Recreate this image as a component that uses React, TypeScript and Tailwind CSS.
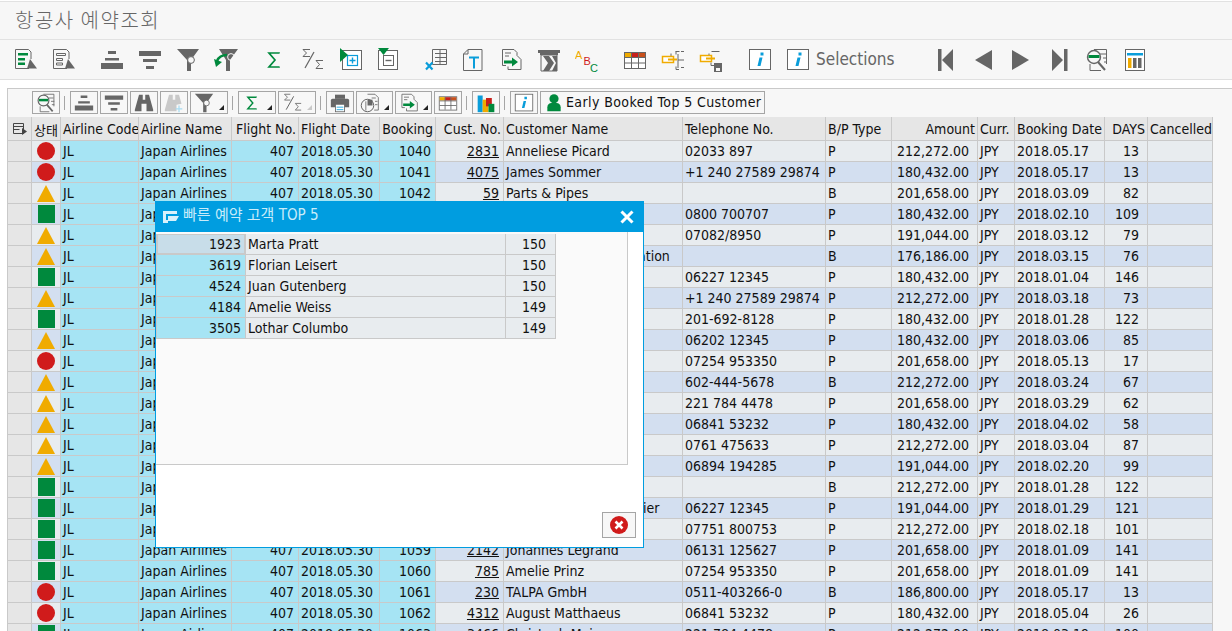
import type { FC, ReactNode } from 'react';

const GRAY = '#666666';
const GREEN = '#00893d';
const BLUE = '#0a9dda';

type Kind = 'red' | 'tri' | 'sq';
type Row = [Kind, string, string, string, string, string, string, string, string];

// rows 3-18 sit behind the dialog, so their customer columns can't be read
const rows: Row[] = [
  ['red', '1040', '2831', 'Anneliese Picard', '02033 897', 'P', '212,272.00', '2018.05.17', '13'],
  ['red', '1041', '4075', 'James Sommer', '+1 240 27589 29874', 'P', '180,432.00', '2018.05.17', '13'],
  ['tri', '1042', '59', 'Parts & Pipes', '', 'B', '201,658.00', '2018.03.09', '82'],
  ['sq', '1043', '', '', '0800 700707', 'P', '180,432.00', '2018.02.10', '109'],
  ['tri', '1044', '', '', '07082/8950', 'P', '191,044.00', '2018.03.12', '79'],
  ['tri', '1045', '', 'ation', '', 'B', '176,186.00', '2018.03.15', '76'],
  ['sq', '1046', '', '', '06227 12345', 'P', '180,432.00', '2018.01.04', '146'],
  ['tri', '1047', '', '', '+1 240 27589 29874', 'P', '212,272.00', '2018.03.18', '73'],
  ['sq', '1048', '', '', '201-692-8128', 'P', '180,432.00', '2018.01.28', '122'],
  ['tri', '1049', '', '', '06202 12345', 'P', '180,432.00', '2018.03.06', '85'],
  ['red', '1050', '', '', '07254 953350', 'P', '201,658.00', '2018.05.13', '17'],
  ['tri', '1051', '', '', '602-444-5678', 'B', '212,272.00', '2018.03.24', '67'],
  ['tri', '1052', '', '', '221 784 4478', 'P', '201,658.00', '2018.03.29', '62'],
  ['tri', '1053', '', '', '06841 53232', 'P', '180,432.00', '2018.04.02', '58'],
  ['tri', '1054', '', '', '0761 475633', 'P', '212,272.00', '2018.03.04', '87'],
  ['tri', '1055', '', '', '06894 194285', 'P', '191,044.00', '2018.02.20', '99'],
  ['sq', '1056', '', '', '', 'B', '212,272.00', '2018.01.28', '122'],
  ['sq', '1057', '', 'ier', '06227 12345', 'P', '191,044.00', '2018.01.29', '121'],
  ['sq', '1058', '', '', '07751 800753', 'P', '212,272.00', '2018.02.18', '101'],
  ['sq', '1059', '2142', 'Johannes Legrand', '06131 125627', 'P', '201,658.00', '2018.01.09', '141'],
  ['sq', '1060', '785', 'Amelie Prinz', '07254 953350', 'P', '201,658.00', '2018.01.09', '141'],
  ['red', '1061', '230', 'TALPA GmbH', '0511-403266-0', 'B', '186,800.00', '2018.05.17', '13'],
  ['red', '1062', '4312', 'August Matthaeus', '06841 53232', 'P', '180,432.00', '2018.05.04', '26'],
  ['sq', '1063', '3466', 'Christoph Mair', '221 784 4478', 'P', '212,272.00', '2018.03.19', '100'],
];

const top5 = [
  ['1923', 'Marta Pratt', '150'],
  ['3619', 'Florian Leisert', '150'],
  ['4524', 'Juan Gutenberg', '150'],
  ['4184', 'Amelie Weiss', '149'],
  ['3505', 'Lothar Columbo', '149'],
];

const headers: [string, boolean?][] = [
  ['상태'],
  ['Airline Code'],
  ['Airline Name'],
  ['Flight No.', true],
  ['Flight Date'],
  ['Booking', true],
  ['Cust. No.', true],
  ['Customer Name'],
  ['Telephone No.'],
  ['B/P Type'],
  ['Amount', true],
  ['Curr.'],
  ['Booking Date'],
  ['DAYS', true],
  ['Cancelled'],
];

const gridCols =
  'grid grid-cols-[24px_29px_78px_93px_67px_81px_56px_68px_179px_143px_66px_86px_37px_90px_43px_65px]';

const Ico: FC<{ size?: number; children: ReactNode }> = ({ size = 24, children }) => (
  <svg width={size} height={size} viewBox="0 0 24 24" className="shrink-0">
    {children}
  </svg>
);

const icons: Record<string, ReactNode> = {
  selectAll: (
    <>
      <path d="M2.5 1.5H15.5L18 4V11M16 20.5H2.5V1.5" fill="none" stroke={GRAY} />
      <path d="M5 5h10v2.5H5zM5 10h7v2.5H5zM5 14.5h7V17H5z" fill={GREEN} />
      <path d="M17 11L24 20.5H14z" fill={GRAY} />
    </>
  ),
  deselect: (
    <>
      <path d="M2.5 1.5H15.5L18 4V11M16 20.5H2.5V1.5" fill="none" stroke={GRAY} />
      <path d="M5.5 5.5h9v2h-9zM5.5 10.5h6v2h-6zM5.5 15h6v2h-6z" fill="none" stroke={GRAY} />
      <path d="M17 11L24 20.5H14z" fill={GRAY} />
    </>
  ),
  sortAsc: <path d="M8 3h8v3H8zM5 10h14v2.5H5zM1 15h22v6H1z" fill={GRAY} />,
  sortDesc: <path d="M1 3h22v5H1zM5 11h14v3H5zM8 18h8v3H8z" fill={GRAY} />,
  filter: (
    <>
      <path d="M1 1h22L15 12v11h-4V12z" fill={GRAY} />
      <circle cx="15" cy="12" r="3.4" fill="#f7f7f7" stroke={GRAY} />
    </>
  ),
  filterDel: (
    <>
      <path d="M5 1h19L16 12v11h-4V12z" fill={GRAY} />
      <circle cx="17" cy="9" r="3.4" fill="none" stroke="#f7f7f7" />
      <path d="M3 13c2-5 6-6 10-6" fill="none" stroke={GREEN} strokeWidth="2.4" />
      <path d="M0 11l8 3-6 5z" fill={GREEN} />
    </>
  ),
  sum: <path d="M17 5.5V5H7l6 7-6 7h10v-.5" fill="none" stroke={GREEN} strokeWidth="1.7" />,
  subtotal: (
    <>
      <path d="M10 1.500H3l3.500 3.500L3 8.500h7M23 12.500h-7l3.500 4-3.500 4h7" fill="none" stroke={GRAY} />
      <path d="M14 4L5 20" stroke={GRAY} strokeWidth="1.200" />
    </>
  ),
  expand: (
    <>
      <rect x="4.500" y="2.500" width="19" height="19" fill="#fff" stroke={GRAY} />
      <rect x="9.500" y="7.500" width="10" height="10" fill="none" stroke={BLUE} strokeWidth="1.200" />
      <path d="M14.500 9.500v6M11.500 12.500h6" stroke={BLUE} strokeWidth="1.400" />
      <path d="M2 0l8 7-8 7z" fill={GREEN} />
    </>
  ),
  collapse: (
    <>
      <rect x="2.500" y="2.500" width="19" height="19" fill="#fff" stroke={GRAY} />
      <rect x="7.500" y="7.500" width="10" height="10" fill="none" stroke={GRAY} />
      <path d="M9.500 12.500h6" stroke={GRAY} strokeWidth="1.400" />
      <path d="M2 0h11L7.500 7z" fill={GREEN} />
    </>
  ),
  excel: (
    <>
      <path d="M9.500 1.500h14v15h-14zM12 5.500h11M12 9.500h11M12 13.500h11M17 2v14" fill="none" stroke={GRAY} />
      <path d="M3 14.500l6.500 7M9.500 14.500L3 21.500" stroke={BLUE} strokeWidth="2.200" />
    </>
  ),
  word: (
    <>
      <path d="M7 1.500h14v21H2.500V6z M7 1.500V6H2.500" fill="none" stroke={GRAY} />
      <path d="M8 8.500h10v2H14v10h-2v-10H8z" fill={BLUE} />
    </>
  ),
  exportIco: (
    <>
      <path d="M3.500 1.500H15l3 3v3M3.500 1.500v16H7" fill="none" stroke={GRAY} />
      <path d="M18 7.500l4 4v10H9v-3" fill="none" stroke={GRAY} />
      <path d="M6 5h6M6 8h4" stroke={GRAY} />
      <path d="M5 12.500h8v-3l6 4.500-6 4.500v-3H5z" fill={GREEN} />
    </>
  ),
  pdfIco: (
    <>
      <path d="M1 2h22v3h-2v2H3V5H1z" fill={GRAY} />
      <path d="M4 7h16v16H4z" fill="none" stroke={GRAY} />
      <path d="M6 8h6l5 7-5 8H6l5-8z" fill={GRAY} />
      <path d="M15 8h5v15h-5l4-8z" fill={GRAY} />
    </>
  ),
  abc: (
    <>
      <text x="0" y="11" fontSize="11" fill="#f0ab00" fontFamily="'Liberation Sans',sans-serif">A</text>
      <text x="8.500" y="17" fontSize="11" fill="#d01b1b" fontFamily="'Liberation Sans',sans-serif">B</text>
      <text x="15" y="23.500" fontSize="11" fill={GREEN} fontFamily="'Liberation Sans',sans-serif">C</text>
    </>
  ),
  table: (
    <>
      <rect x="1.500" y="4.500" width="21" height="16" fill="#fff" stroke={GRAY} />
      <path d="M2 5h6.500v4H2z" fill="#f0ab00" />
      <path d="M8.500 5h7v4h-7z" fill="#c8201c" />
      <path d="M15.500 5H22v4h-6.500z" fill="#c8501c" />
      <path d="M2 9.500h20M2 15h20M8.500 5v15M15.500 5v15" stroke={GRAY} />
    </>
  ),
  tree: (
    <>
      <path d="M14.500 3.500h4M20 3.500h3M10 5.500v3M15 3.500v3M17 12h6M20 19.500h3M15 18.500v3h3M17 6v14" fill="none" stroke={GRAY} />
      <rect x="1.500" y="8.500" width="11" height="6" fill="#fff" stroke="#f0ab00" strokeWidth="1.500" />
      <path d="M7 10.500h9v2H7z" fill="#f0ab00" />
    </>
  ),
  treeSave: (
    <>
      <path d="M12.500 3.500h8M10 5.500v3M12 14.500v3h4" fill="none" stroke={GRAY} />
      <rect x="1.500" y="7.500" width="11" height="6" fill="#fff" stroke="#f0ab00" strokeWidth="1.500" />
      <path d="M7 9.500h9v2H7z" fill="#f0ab00" />
      <path d="M15 15h8v9h-8z" fill={GRAY} />
      <path d="M17 20h4v3h-4z" fill="#f7f7f7" />
    </>
  ),
  info: (
    <>
      <rect x="1.500" y="1.500" width="21" height="20" fill="#fff" stroke={GRAY} />
      <path d="M12.500 4.500h3v3h-3zM11.500 9.500h3l-2 8.500h-3z" fill={BLUE} />
    </>
  ),
  first: <path d="M5 1h3.500v22H5zM20 1v22L9 12z" fill={GRAY} />,
  prev: <path d="M21 2v20L4 12z" fill={GRAY} />,
  next: <path d="M3 2v20l17-10z" fill={GRAY} />,
  last: <path d="M5 1v22l11-11zM17 1h3.500v22H17z" fill={GRAY} />,
  find: (
    <>
      <path d="M9 1.500h12.500V16M5 16v6.500h11" fill="none" stroke={GRAY} />
      <path d="M15 6h6M18 10h4M19 14h3" stroke={GRAY} />
      <circle cx="9" cy="9" r="6.500" fill="#f7f7f7" stroke={GRAY} strokeWidth="1.400" />
      <path d="M3.500 7h11v3h-11z" fill={GREEN} />
      <path d="M13 14l7 8" stroke={GRAY} strokeWidth="2" />
    </>
  ),
  layout: (
    <>
      <rect x="2.500" y="1.500" width="19" height="21" fill="#fff" stroke={GRAY} />
      <path d="M4 5h16v2.500H4z" fill={BLUE} />
      <path d="M5 10h3.500v10H5z" fill="#f0ab00" />
      <path d="M10 10h3.500v10H10zM15 10h3.500v10H15z" fill={GRAY} />
    </>
  ),
  binoc: <path d="M6 2h4.500v6h3V2H18l5 18v2h-8v-9h-6v9H1v-2z" fill={GRAY} />,
  binocOff: (
    <>
      <path d="M6 2h4.500v6h3V2H18l3 11-6 1v8H9v-9H9v9H1v-2z" fill="#c9c9c9" />
      <path d="M18 15v8M14 19h8" stroke="#a8dcf2" strokeWidth="1.500" />
    </>
  ),
  print: (
    <>
      <path d="M6 2h12v5H6z" fill={GRAY} />
      <path d="M1 9c0-1 1-2 2-2h18c1 0 2 1 2 2v8H1z" fill={GRAY} />
      <rect x="6.500" y="13.500" width="11" height="9" fill="#fff" stroke={GRAY} />
      <path d="M8 17h8M8 20h8" stroke={BLUE} />
    </>
  ),
  views: (
    <>
      <path d="M9 1.500h9l4 4v15h-5" fill="none" stroke={GRAY} />
      <path d="M14 6h5M18 10h3M18 14h3" stroke={GRAY} />
      <circle cx="9" cy="15" r="7.500" fill="#f7f7f7" stroke={GRAY} strokeWidth="1.200" />
      <path d="M9 8h6v7H9z" fill={GRAY} />
      <path d="M7 10v11" stroke={GRAY} />
    </>
  ),
  graphic: (
    <>
      <path d="M2 3h6v20H2z" fill={BLUE} />
      <path d="M8 8h7v15H8z" fill="#f0ab00" />
      <path d="M12 6h7v10h-7z" fill="#c8201c" />
      <path d="M15 13h7v10h-7z" fill={GREEN} />
    </>
  ),
  person: (
    <>
      <circle cx="12" cy="7" r="5.500" fill={GREEN} />
      <path d="M4 22v-5c0-3 2-5 5-5h6c3 0 5 2 5 5v5z" fill={GREEN} />
    </>
  ),
};

const TopIcon: FC<{ name: string; className?: string }> = ({ name, className }) => (
  <span className={`flex w-[38px] shrink-0 justify-center ${className ?? ''}`}>
    <Ico>{icons[name]}</Ico>
  </span>
);

const ToolBtn: FC<{
  name: string;
  w?: string;
  menu?: boolean;
  off?: boolean;
  children?: ReactNode;
}> = ({ name, w = 'w-[28px]', menu, off, children }) => (
  <span className={`relative flex h-[23px] shrink-0 items-center border border-[#a5a5a5] pl-[3px] ${w}`}>
    <Ico size={20}>{icons[name]}</Ico>
    {children}
    {menu && (
      <span
        className={`absolute right-[3px] bottom-[3px] h-0 w-0 border-b-[5px] border-l-[5px] border-l-transparent ${
          off ? 'border-b-[#c9c9c9]' : 'border-b-[#222]'
        }`}
      />
    )}
  </span>
);

const Sep = () => <span className="mr-[5px] ml-[4px] h-[14px] w-[1px] shrink-0 bg-[#a5a5a5]" />;

const Status: FC<{ kind: Kind }> = ({ kind }) => {
  if (kind === 'red') return <span className="h-[18px] w-[18px] rounded-full bg-[#d01b1b]" />;
  if (kind === 'sq') return <span className="h-[18px] w-[17px] bg-[#00893d]" />;
  return (
    <span className="h-0 w-0 border-x-[9px] border-b-[17px] border-x-transparent border-b-[#f0ab00]" />
  );
};

const Cell: FC<{ className?: string; children?: ReactNode }> = ({ className = '', children }) => (
  <div className={`overflow-hidden whitespace-nowrap border-r border-b border-[#c9c9c9] px-[2px] leading-[20px] ${className}`}>
    {children}
  </div>
);

const CloseCircle = () => (
  <svg width="20" height="20" viewBox="0 0 20 20">
    <circle cx="10" cy="10" r="9" fill="#d01b1b" />
    <path d="M6.500 6.500l7 7M13.500 6.500l-7 7" stroke="#fff" strokeWidth="2.600" />
  </svg>
);

const Dialog = () => (
  <div className="absolute top-[201px] left-[155px] flex h-[347px] w-[489px] flex-col border border-[#009de0] bg-white">
    <div className="flex h-[30px] shrink-0 items-center bg-[#009de0] pr-[8px] pl-[6px] text-[#c8ecfa]">
      <svg width="18" height="14" viewBox="0 0 18 14" className="mr-[3px]">
        <path d="M1 1h14v3H4v6h2v3H1z" fill="#d8f1fb" />
        <path d="M6 6h11l-3 5H6z" fill="#d8f1fb" />
      </svg>
      <span className="pb-[3px] text-[15px]">빠른 예약 고객 TOP 5</span>
      <svg width="16" height="16" viewBox="0 0 16 16" className="mr-0 ml-auto">
        <path d="M2.500 2.500l11 11M13.500 2.500l-11 11" stroke="#fff" strokeWidth="3" />
      </svg>
    </div>
    <div className="mr-[15px] h-[233px] border-r border-b border-[#c9c9c9] bg-[#fafafa] pt-[2px]">
      <div className="w-[400px] border-l border-[#c9c9c9]">
        {top5.map(([id, name, n], i) => (
          <div key={id} className="grid grid-cols-[89px_260px_50px]">
            <Cell
              className={`pr-[4px] text-right ${
                i === 0 ? 'bg-[#c8dde9] shadow-[inset_0_0_0_1px_#c9c9c9]' : 'bg-[#a6e4f4]'
              }`}
            >
              {id}
            </Cell>
            <Cell className="bg-[#e8ecef]">{name}</Cell>
            <Cell className="bg-[#e8ecef] pr-[9px] text-right">{n}</Cell>
          </div>
        ))}
      </div>
    </div>
    <div className="flex justify-end pt-[47px] pr-[7px]">
      <span className="flex h-[26px] w-[34px] items-center justify-center border border-[#a5a5a5] bg-[#f7f7f7]">
        <CloseCircle />
      </span>
    </div>
  </div>
);

export default function App() {
  return (
    <div className="relative h-[631px] w-[1232px] overflow-hidden bg-white font-['DejaVu_Sans_Condensed','DejaVu_Sans','Noto_Sans_CJK_KR',sans-serif] text-[14px] text-[#111] [font-stretch:condensed]">
      <div className="mt-[1px] flex h-[39px] items-center border-y border-[#e2e2e2] bg-[#f7f7f7] pb-[1px] pl-[15px] font-['Noto_Sans_CJK_KR',sans-serif] text-[20px] font-light tracking-[1.500px] text-[#666]">
        항공사 예약조회
      </div>

      <div className="flex h-[40px] items-center border-b border-[#e0e0e0] bg-[#f7f7f7] pl-[6px]">
        <TopIcon name="selectAll" />
        <TopIcon name="deselect" />
        <TopIcon name="sortAsc" className="ml-[11px]" />
        <TopIcon name="sortDesc" />
        <TopIcon name="filter" />
        <TopIcon name="filterDel" />
        <TopIcon name="sum" className="ml-[10px]" />
        <TopIcon name="subtotal" />
        <TopIcon name="expand" />
        <TopIcon name="collapse" />
        <TopIcon name="excel" className="ml-[9px]" />
        <TopIcon name="word" />
        <TopIcon name="exportIco" />
        <TopIcon name="pdfIco" />
        <TopIcon name="abc" />
        <TopIcon name="table" className="ml-[10px]" />
        <TopIcon name="tree" />
        <TopIcon name="treeSave" />
        <TopIcon name="info" className="ml-[11px]" />
        <TopIcon name="info" />
        <span className="mr-[30px] ml-[-1px] w-[80px] pt-[1px] text-[17px] text-[#666]">Selections</span>
        <TopIcon name="first" />
        <TopIcon name="prev" />
        <TopIcon name="next" />
        <TopIcon name="last" />
        <TopIcon name="find" />
        <TopIcon name="layout" />
      </div>

      <div className="h-[8px] bg-white" />

      <div className="ml-[7px] flex flex-col border-t border-l border-[#c9c9c9] bg-[#f7f7f7]">
        <div className="flex h-[28px] items-center pb-[1px] pl-[24px]">
          <ToolBtn name="find" />
          <Sep />
          <ToolBtn name="sortAsc" />
          <span className="w-[2px]" />
          <ToolBtn name="sortDesc" />
          <span className="w-[2px]" />
          <ToolBtn name="binoc" />
          <span className="w-[2px]" />
          <ToolBtn name="binocOff" />
          <span className="w-[2px]" />
          <ToolBtn name="filter" w="w-[38px]" menu />
          <Sep />
          <ToolBtn name="sum" w="w-[38px]" menu />
          <span className="w-[2px]" />
          <ToolBtn name="subtotal" w="w-[38px]" menu off />
          <Sep />
          <ToolBtn name="print" />
          <span className="w-[2px]" />
          <ToolBtn name="views" w="w-[37px]" menu />
          <span className="w-[2px]" />
          <ToolBtn name="exportIco" w="w-[37px]" menu />
          <span className="w-[2px]" />
          <ToolBtn name="table" />
          <Sep />
          <ToolBtn name="graphic" />
          <Sep />
          <ToolBtn name="info" />
          <span className="w-[2px]" />
          <ToolBtn name="person" w="w-[225px]">
            <span className="ml-[2px] tracking-[0.4px] text-[#111]">Early Booked Top 5 Customer</span>
          </ToolBtn>
        </div>

        <div className={gridCols}>
          <div className="flex h-[24px] items-center justify-center border-r border-b border-[#c9c9c9] bg-[#e6e6e6]">
            <svg width="16" height="14" viewBox="0 0 16 14">
              <path d="M1.500 1.500h10v10h-10zM1.500 4.500h10M1.500 7.500h6" fill="none" stroke="#444" />
              <path d="M10 6l5 3.500-5 3.500z" fill="#444" />
            </svg>
          </div>
          {headers.map(([h, right], i) => (
            <Cell
              key={h}
              className={`h-[24px] bg-[#e6e6e6] leading-[25px] ${right ? 'text-right' : ''} ${
                i === 0 ? "font-['Noto_Sans_CJK_KR',sans-serif] text-[13px]" : ''
              }`}
            >
              {h}
            </Cell>
          ))}
        </div>

        {rows.map((r, i) => {
          const alt = i % 2 === 1 ? 'bg-[#d3dff0]' : 'bg-[#e8ecef]';
          // names of rows under the dialog only show their last letters
          const namePad = r[3] === 'ation' ? 'pl-[134px]' : r[3] === 'ier' ? 'pl-[139px]' : '';
          return (
            <div key={r[1]} className={`${gridCols} h-[21px]`}>
              <Cell className="bg-[#e6e6e6]" />
              <div className={`flex items-center justify-center border-r border-b border-[#c9c9c9] ${alt}`}>
                <Status kind={r[0]} />
              </div>
              <Cell className="bg-[#a6e4f4]">JL</Cell>
              <Cell className="bg-[#a6e4f4]">Japan Airlines</Cell>
              <Cell className="bg-[#a6e4f4] pr-[4px] text-right">407</Cell>
              <Cell className="bg-[#a6e4f4]">2018.05.30</Cell>
              <Cell className="bg-[#a6e4f4] pr-[4px] text-right">{r[1]}</Cell>
              <Cell className={`${alt} pr-[4px] text-right`}>
                <span className="underline">{r[2]}</span>
              </Cell>
              <Cell className={`${alt} ${namePad}`}>{r[3]}</Cell>
              <Cell className={alt}>{r[4]}</Cell>
              <Cell className={alt}>{r[5]}</Cell>
              <Cell className={`${alt} pr-[8px] text-right`}>{r[6]}</Cell>
              <Cell className={alt}>JPY</Cell>
              <Cell className={alt}>{r[7]}</Cell>
              <Cell className={`${alt} pr-[8px] text-right`}>{r[8]}</Cell>
              <Cell className={alt} />
            </div>
          );
        })}
      </div>

      <Dialog />
    </div>
  );
}
